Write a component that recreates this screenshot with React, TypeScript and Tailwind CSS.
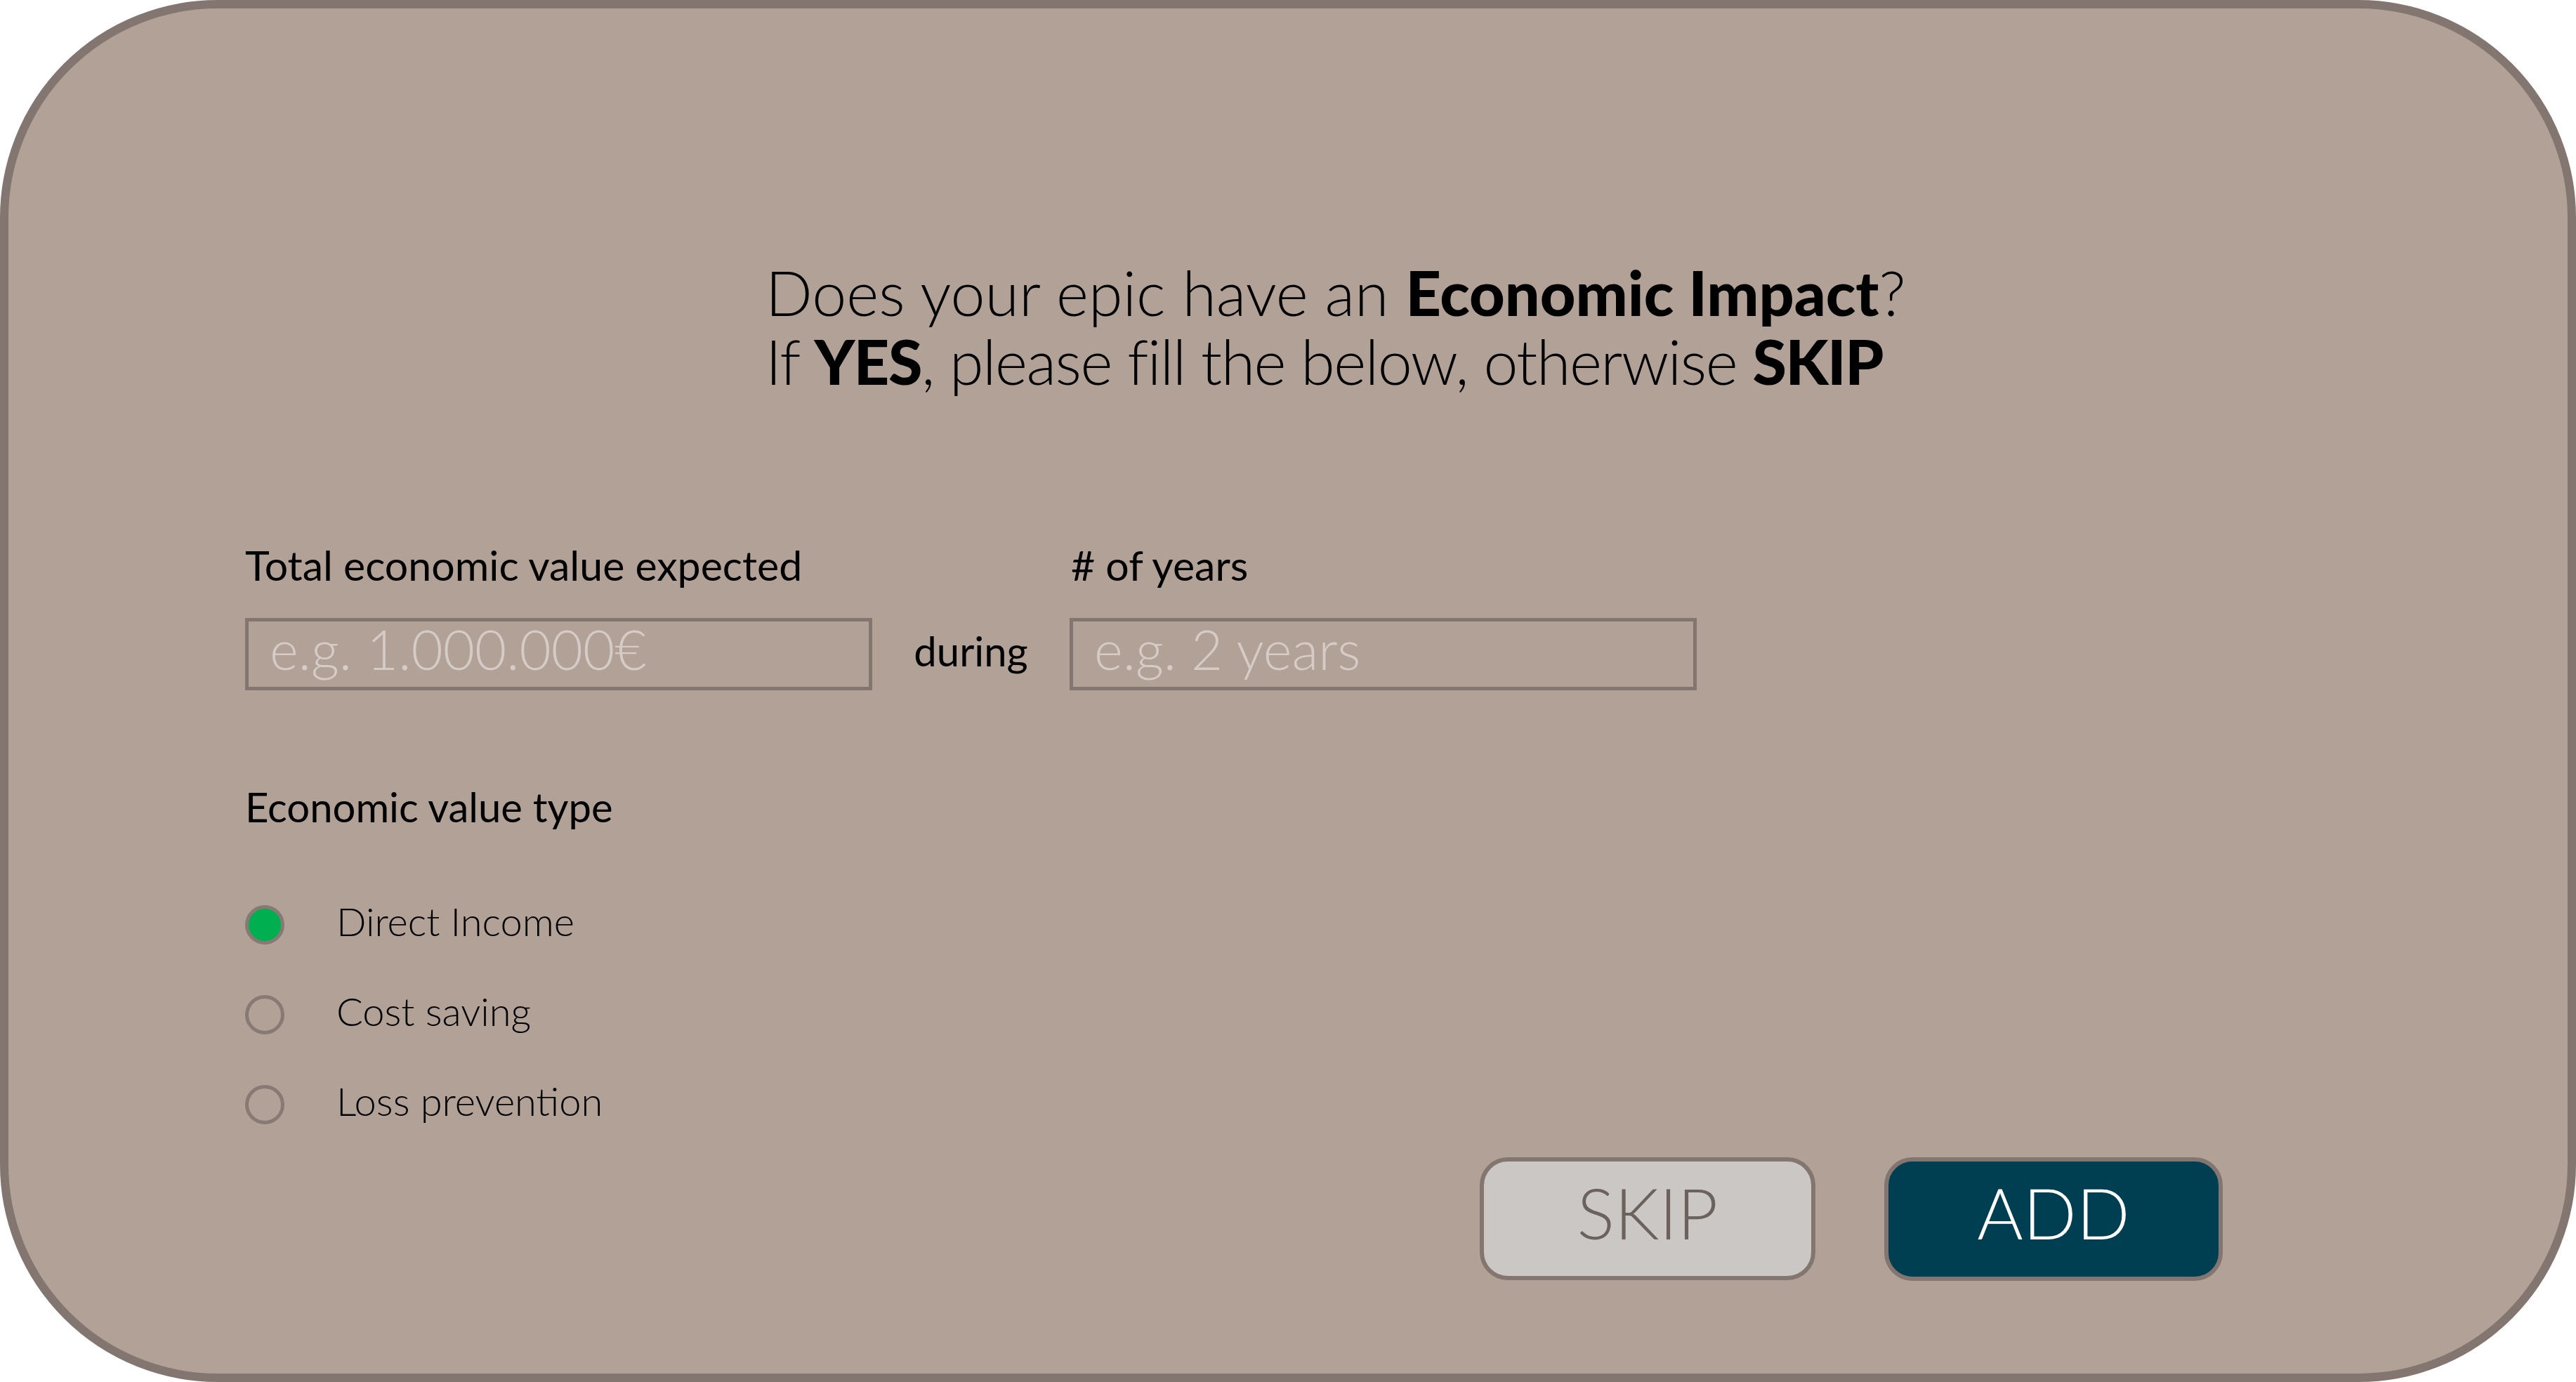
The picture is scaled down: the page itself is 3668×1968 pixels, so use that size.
import React from "react";

const futura = { fontFamily: "Lato, 'Noto Sans', sans-serif" };

function Radio({ checked, label }: { checked?: boolean; label: string }) {
  return (
    <div className="flex items-center h-[80px]">
      <div
        className={
          "w-[56px] h-[56px] rounded-full border-[5px] border-[#877a74] " +
          (checked ? "bg-[#00b050]" : "bg-transparent")
        }
      />
      <span className="ml-[74px] pb-[10px] text-[56px] font-light text-black leading-none" style={futura}>
        {label}
      </span>
    </div>
  );
}

export default function App() {
  return (
    <div className="w-full h-screen bg-white">
      <div className="w-full h-full box-border border-[12px] border-[#837670] bg-[#b2a197] rounded-[310px] pl-[337px] pt-[355px] flex flex-col" style={futura}>
        <div className="ml-[741px] text-[88px] leading-[98px] font-light text-black">
          <div>
            Does your epic have an <span className="font-black">Economic Impact</span>?
          </div>
          <div className="tracking-[-1.5px]">
            If <span className="font-black">YES</span>, please fill the below, otherwise{" "}
            <span className="font-black">SKIP</span>
          </div>
        </div>

        <div className="mt-[210px] flex items-end">
          <div className="flex flex-col">
            <div className="text-[59px] leading-[64px] text-black">Total economic value expected</div>
            <div className="mt-[43px] w-[893px] h-[103px] border-[5px] border-[#837670] flex items-center pl-[30px] pb-[16px]">
              <span className="text-[78px] font-light text-[#d6ccc7] leading-none">e.g. 1.000.000€</span>
            </div>
          </div>
          <div className="w-[281px] h-[103px] flex items-center justify-center pb-[10px] text-[58px] text-black">during</div>
          <div className="flex flex-col">
            <div className="text-[59px] leading-[64px] text-black ml-[2px]">&#35; of years</div>
            <div className="mt-[43px] w-[893px] h-[103px] border-[5px] border-[#837670] flex items-center pl-[30px] pb-[16px]">
              <span className="text-[78px] font-light text-[#d6ccc7] leading-none">e.g. 2 years</span>
            </div>
          </div>
        </div>

        <div className="mt-[134px] text-[58px] leading-[64px] text-black">Economic value type</div>

        <div className="mt-[96px] flex flex-col gap-[48px]">
          <Radio checked label="Direct Income" />
          <Radio label="Cost saving" />
          <Radio label="Loss prevention" />
        </div>

        <div className="mt-[35px] flex ml-[1758px] gap-[98px]">
          <button className="w-[478px] h-[175px] rounded-[40px] border-[6px] border-[#837670] bg-[#cbc7c5] text-[#6b625d] text-[100px] font-light leading-none pb-[20px]">
            SKIP
          </button>
          <button className="w-[482px] h-[176px] rounded-[40px] border-[6px] border-[#837670] bg-[#003f52] text-white text-[100px] font-light leading-none pb-[20px]">
            ADD
          </button>
        </div>
      </div>
    </div>
  );
}
